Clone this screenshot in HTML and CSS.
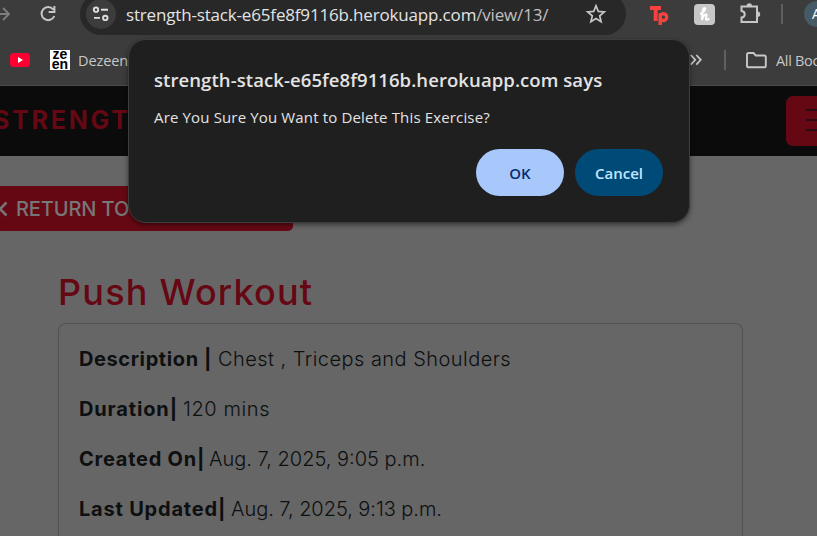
FILE: index.html
```html
<!DOCTYPE html>
<html lang="en">
<head>
<meta charset="utf-8">
<title>Strength Stack</title>
<link rel="stylesheet" href="styles.css">
</head>
<body>
<div class="browser">
  <header class="toolbar">
    <svg class="forward" width="12" height="20" viewBox="0 0 12 20"><path d="M0 10H9M3 4l6 6-6 6"/></svg>
    <svg class="reload" width="18" height="18" viewBox="0 0 18 18"><path d="M14.200 4.300A6.600 6.600 0 1 0 15.300 11M15.400 1v6H9.600"/></svg>
    <div class="omnibox">
      <span class="site-info"><svg width="18" height="18" viewBox="0 0 18 18"><circle cx="4" cy="4.700" r="2.200"/><path d="M9 4.700h7M2 12.900h6"/><circle cx="13.300" cy="12.900" r="2.200"/></svg></span>
      <span class="url">strength-stack-e65fe8f9116b.herokuapp.com<span class="path">/view/13/</span></span>
      <svg class="star" width="22" height="22" viewBox="0 0 22 22"><path d="M11 2.800l2.300 5.600 6 .5-4.600 3.900 1.400 5.900L11 15.600l-5.100 3.100 1.400-5.900-4.600-3.900 6-.5z"/></svg>
    </div>
    <svg class="tp" width="19" height="20" viewBox="0 0 19 20"><path d="M0 0h11v4H7.600v11H3.700V4H0z"/><path class="bowl" d="M10.200 19V7.200M10.200 9.800a3.400 3.400 0 1 1 0 2.600"/></svg>
    <span class="honey"><svg width="21" height="21" viewBox="0 0 21 21"><path d="M6 10c4-1 6.600-5.600 4.500-6C8.500 3.700 8.400 9 8 16c1-4 3.500-6.500 4.500-5.500C13.600 11.500 10.200 15.800 13 15.800c1 0 1.700-.8 2.200-1.600"/></svg></span>
    <svg class="puzzle" width="22" height="22" viewBox="0 0 22 22"><path d="M2.500 4.500H18V20H2.500V15.600C6.800 15 6.800 9.400 2.500 8.900Z"/><path class="knob" d="M7.600 4a2.700 2.700 0 0 1 5.400 0zM18.500 9.500a2.700 2.700 0 0 1 0 5.400z"/></svg>
    <i class="rule"></i>
    <span class="avatar">A</span>
  </header>
  <div class="bookmarks">
    <svg class="youtube" width="20" height="14" viewBox="0 0 20 14"><rect width="20" height="14" rx="3.500"/><path d="M8 4l5 3-5 3z"/></svg>
    <span class="zeen"><span>ze</span><span>en</span></span>
    <span class="bookmark">Dezeen</span>
    <svg class="more" width="12" height="12" viewBox="0 0 12 12"><path d="M.8 1l4.500 4.800L.8 10.600M6.300 1l4.500 4.800-4.500 4.800"/></svg>
    <i class="rule"></i>
    <svg class="folder" width="21" height="17" viewBox="0 0 21 17"><path d="M1 2.600Q1 1 2.600 1H7.500l2.300 2.500h8.400q1.600 0 1.600 1.600v8.600q0 1.600-1.600 1.600H2.600Q1 15.300 1 13.700z"/></svg>
    <span class="all">All Bookmarks</span>
  </div>
</div>
<nav class="navbar">
  <span class="brand">STRENGTH</span>
  <span class="menu"><i></i><i></i><i></i></span>
</nav>
<main>
  <a class="return"><svg width="10" height="18" viewBox="0 0 10 18"><path d="M8.500 2.500L2 9l6.500 6.500"/></svg><span>RETURN TO WORKOUTS</span></a>
  <h1><span>Push Workout</span></h1>
  <section class="card">
    <p><b class="k1">Description |</b><span class="v1">Chest , Triceps and Shoulders</span></p>
    <p><b class="k2">Duration|</b><span class="v2">120 mins</span></p>
    <p><b class="k3">Created On|</b><span class="v3">Aug. 7, 2025, 9:05 p.m.</span></p>
    <p><b class="k4">Last Updated|</b><span class="v4">Aug. 7, 2025, 9:13 p.m.</span></p>
  </section>
</main>
<div class="dialog" role="dialog">
  <h2><span>strength-stack-e65fe8f9116b.herokuapp.com says</span></h2>
  <p><span>Are You Sure You Want to Delete This Exercise?</span></p>
  <div class="actions"><button class="ok">OK</button><button class="cancel">Cancel</button></div>
</div>
</body>
</html>
```
FILE: styles.css
```css
* { box-sizing: border-box; }
html, body { height: 100%; }
body { display: flex; flex-direction: column; margin: 0; overflow: hidden; background: #666; font-family: "Open Sans", "Noto Sans", sans-serif; white-space: nowrap; }
svg { fill: none; stroke: #c7c7c7; stroke-width: 2; flex: none; display: block; }
i { display: block; flex: none; }

.browser { flex: none; height: 86px; background: #3c3c3c; border-bottom: 1px solid #4b4b4b; overflow: hidden; }
.toolbar { display: flex; align-items: center; height: 42px; margin-top: -7px; }
.forward { stroke: #7e7e7e; stroke-width: 1.8; }
.reload { margin-left: 27px; }
.omnibox { display: flex; align-items: center; flex: none; width: 546px; height: 42px; margin-left: 23px; padding-left: 6px; border-radius: 21px; background: #282828; }
.site-info { display: flex; align-items: center; justify-content: center; flex: none; width: 30px; height: 30px; border-radius: 50%; background: #3c3c3c; }
.site-info svg { stroke-width: 1.9; stroke: #dedede; }
.url { width: 459px; margin-left: 10px; color: #e3e3e3; font-size: 17px; letter-spacing: -.17px; }
.path { color: #c0c0c0; }
.star { stroke-width: 1.7; }
.tp { margin: 4px 0 0 24px; fill: #f8423f; stroke: none; }
.tp .bowl { fill: none; stroke: #f8423f; stroke-width: 3.4; }
.honey { flex: none; margin-left: 25px; border-radius: 4px; background: #c7c7c7; }
.honey svg { stroke: #fff; stroke-width: 2; }
.puzzle { margin: -3px 0 0 24px; stroke-width: 2; }
.puzzle .knob { fill: #c7c7c7; stroke: none; }
.toolbar .rule { width: 2px; height: 20px; margin-left: 20px; background: #5f5f5f; }
.avatar { flex: none; width: 26px; height: 26px; margin-left: 21px; padding-left: 8px; border-radius: 50%; background: #455a64; color: #fff; font-size: 14px; line-height: 26px; }
.bookmarks { display: flex; align-items: center; height: 50px; color: #c7c7c7; font-size: 14.5px; }
.youtube { margin-left: 10px; fill: #ff0033; stroke: none; }
.youtube path { fill: #fff; }
.zeen { display: flex; flex-direction: column; flex: none; width: 20px; height: 20px; margin-left: 20px; background: #fff; color: #000; font: bold 14px/10px "Liberation Sans", sans-serif; text-align: center; }
.zeen span { height: 9.500px; line-height: 8px; }
.bookmark { flex: none; width: 612px; margin-left: 8px; letter-spacing: -.1px; }
.more { stroke-width: 1.7; }
.bookmarks .rule { width: 2px; height: 20px; margin-left: 22px; background: #5f5f5f; }
.folder { margin-left: 20px; stroke-width: 1.9; }
.all { margin-left: 9px; letter-spacing: -.3px; }

.navbar { display: flex; align-items: center; flex: none; height: 70px; background: #0b0b0b; font-family: Inter, sans-serif; }
.brand { width: 786px; flex: none; margin: -2px 0 0 -7px; color: #660814; font-size: 25px; font-weight: 700; letter-spacing: 2.75px; }
.menu { display: flex; flex-direction: column; gap: 8px; flex: none; width: 70px; height: 50px; margin-left: 7px; padding: 13px 20px; border-radius: 7px; background: #660814; }
.menu i { height: 2px; background: #290d12; }

main { display: flex; flex: 1; flex-direction: column; min-height: 0; padding-top: 30px; color: #0d0f10; font-family: Inter, sans-serif; }
.return { display: flex; align-items: center; flex: none; width: 293px; height: 45px; border-radius: 0 5px 5px 0; background: #660814; color: #777; font-size: 20px; font-weight: 500; }
.return svg { stroke: #777; stroke-width: 2.5; margin-left: -2px; }
.return span { margin-left: 8px; letter-spacing: -.1px; }
h1 { flex: none; margin: 37px 0 0 58px; height: 55px; color: #660814; font-size: 36px; font-weight: 500; line-height: 48px; letter-spacing: 1.2px; }
.card { flex: 1; width: 685px; min-height: 0; margin-left: 58px; padding: 20px 20px 0; border: 1px solid #525252; border-bottom: 0; border-radius: 8px 8px 0 0; }
.card p { margin: 0 0 20px; height: 30px; font-size: 20px; line-height: 30px; font-weight: 300; }
.card p:last-child { margin: 0; height: 27px; }
.card b { display: inline-block; font-weight: 700; }
.k1 { width: 139px; letter-spacing: .6px; }
.k2 { width: 104px; letter-spacing: .85px; }
.k3 { width: 130px; letter-spacing: .75px; }
.k4 { width: 152px; letter-spacing: .8px; }
.v1 { letter-spacing: .46px; }
.v2 { letter-spacing: .6px; }
.v4 { letter-spacing: -.05px; }

.dialog { position: absolute; left: 128px; top: 39px; width: 562px; height: 184px; padding: 26px 26px 26px 25px; border: 1px solid #3d3d3d; border-radius: 18px; background: #1f1f1f; color: #e3e3e3; box-shadow: 0 2px 5px rgba(0,0,0,.45); }
.dialog h2 { margin: 0; height: 28px; font-size: 18.5px; line-height: 28px; font-weight: 600; letter-spacing: .08px; }
.dialog p { margin: 12px 0 0; height: 22px; font-size: 15px; line-height: 22px; letter-spacing: .15px; }
.actions { display: flex; justify-content: flex-end; gap: 11px; margin-top: 21px; }
button { width: 88px; height: 47px; padding: 0; border: 0; border-radius: 24px; font: 600 15px "Open Sans", sans-serif; }
.ok { background: #a8c7fa; color: #062e6f; }
.cancel { background: #004a77; color: #c2e7ff; }
```
